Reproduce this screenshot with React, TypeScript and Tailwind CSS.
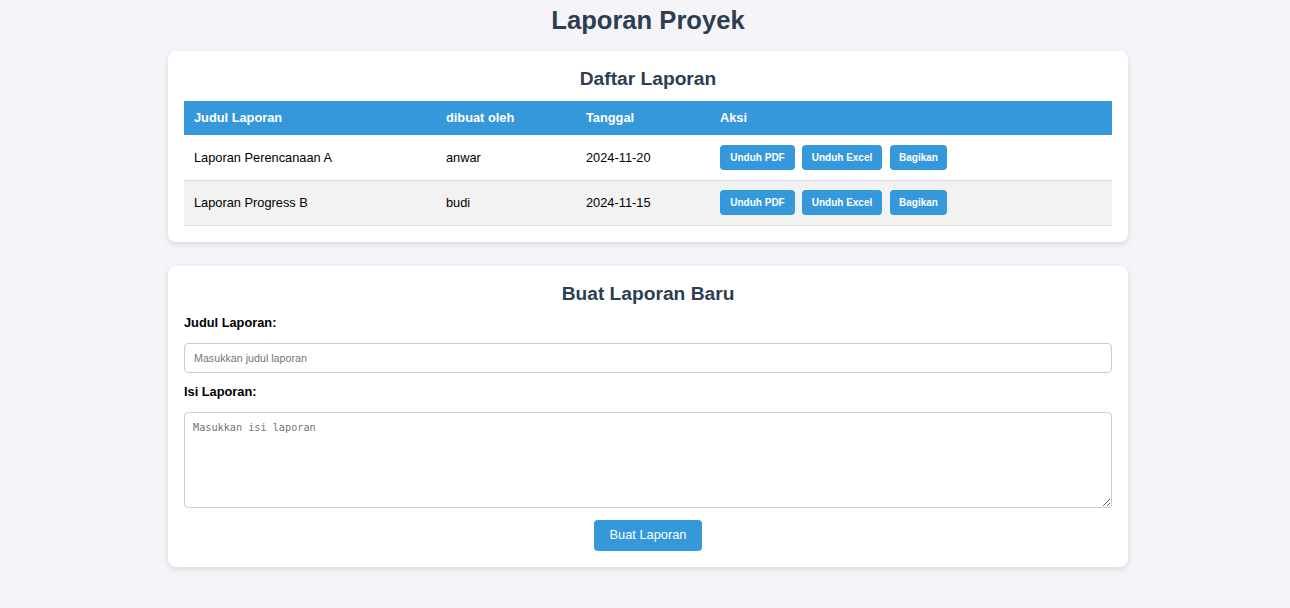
import React from 'react';

const reports = [
  { title: 'Laporan Perencanaan A', author: 'anwar', date: '2024-11-20' },
  { title: 'Laporan Progress B', author: 'budi', date: '2024-11-15' },
];

const App: React.FC = () => {
  return (
    <div className="min-h-[608px] bg-[#f4f4f9] pl-[6px] font-['Liberation_Sans',Arial,sans-serif] text-[12.8px] text-black">
      <h1 className="pt-[5px] text-center text-[25.6px] leading-[31px] font-bold text-[#2c3e50]">Laporan Proyek</h1>

      <div className="mx-auto mt-[15px] w-[960px] space-y-[24px]">
        {/* Daftar Laporan */}
        <div className="rounded-[8px] bg-white p-[16px] shadow-[0_2px_6px_rgba(0,0,0,0.12)]">
          <h2 className="mb-[11px] text-center text-[19.2px] leading-[23px] font-bold text-[#2c3e50]">Daftar Laporan</h2>
          <table className="w-full border-collapse text-left">
            <thead>
              <tr className="h-[34px] bg-[#3498db] text-white">
                <th className="w-[252px] px-[10px] font-bold">Judul Laporan</th>
                <th className="w-[140px] px-[10px] font-bold">dibuat oleh</th>
                <th className="w-[134px] px-[10px] font-bold">Tanggal</th>
                <th className="px-[10px] font-bold">Aksi</th>
              </tr>
            </thead>
            <tbody>
              {reports.map((r, idx) => (
                <tr key={idx} className={`h-[45px] border-b border-[#ddd] ${idx % 2 === 1 ? 'bg-[#f2f2f2]' : 'bg-white'}`}>
                  <td className="px-[10px]">{r.title}</td>
                  <td className="px-[10px]">{r.author}</td>
                  <td className="px-[10px]">{r.date}</td>
                  <td className="px-[10px]">
                    <div className="flex gap-[7px]">
                      <button className="h-[25px] w-[75px] rounded-[4px] bg-[#3498db] text-[10px] font-bold text-white">Unduh PDF</button>
                      <button className="h-[25px] w-[80px] rounded-[4px] bg-[#3498db] text-[10px] font-bold text-white">Unduh Excel</button>
                      <button className="ml-[1px] h-[25px] w-[57px] rounded-[4px] bg-[#3498db] text-[10px] font-bold text-white">Bagikan</button>
                    </div>
                  </td>
                </tr>
              ))}
            </tbody>
          </table>
        </div>

        {/* Buat Laporan Baru */}
        <div className="rounded-[8px] bg-white p-[16px] shadow-[0_2px_6px_rgba(0,0,0,0.12)]">
          <h2 className="mb-[10px] text-center text-[19.2px] leading-[23px] font-bold text-[#2c3e50]">Buat Laporan Baru</h2>
          <label className="block leading-[16px] font-bold">Judul Laporan:</label>
          <input
            type="text"
            placeholder="Masukkan judul laporan"
            className="mt-[12px] block h-[30px] w-full rounded-[4px] border border-[#ccc] px-[9px] text-[10.7px] placeholder:text-[#757575] outline-none"
          />
          <label className="mt-[11px] block leading-[16px] font-bold">Isi Laporan:</label>
          <textarea
            placeholder="Masukkan isi laporan"
            className="mt-[12px] block h-[96px] w-full rounded-[4px] border border-[#ccc] px-[8px] py-[8px] font-['DejaVu_Sans_Mono',monospace] text-[10.2px] leading-[13px] placeholder:text-[#757575] outline-none"
          />
          <div className="mt-[12px] flex justify-center">
            <button className="h-[31px] w-[108px] rounded-[4px] bg-[#3498db] text-[12.8px] text-white">Buat Laporan</button>
          </div>
        </div>
      </div>
    </div>
  );
};

export default App;
